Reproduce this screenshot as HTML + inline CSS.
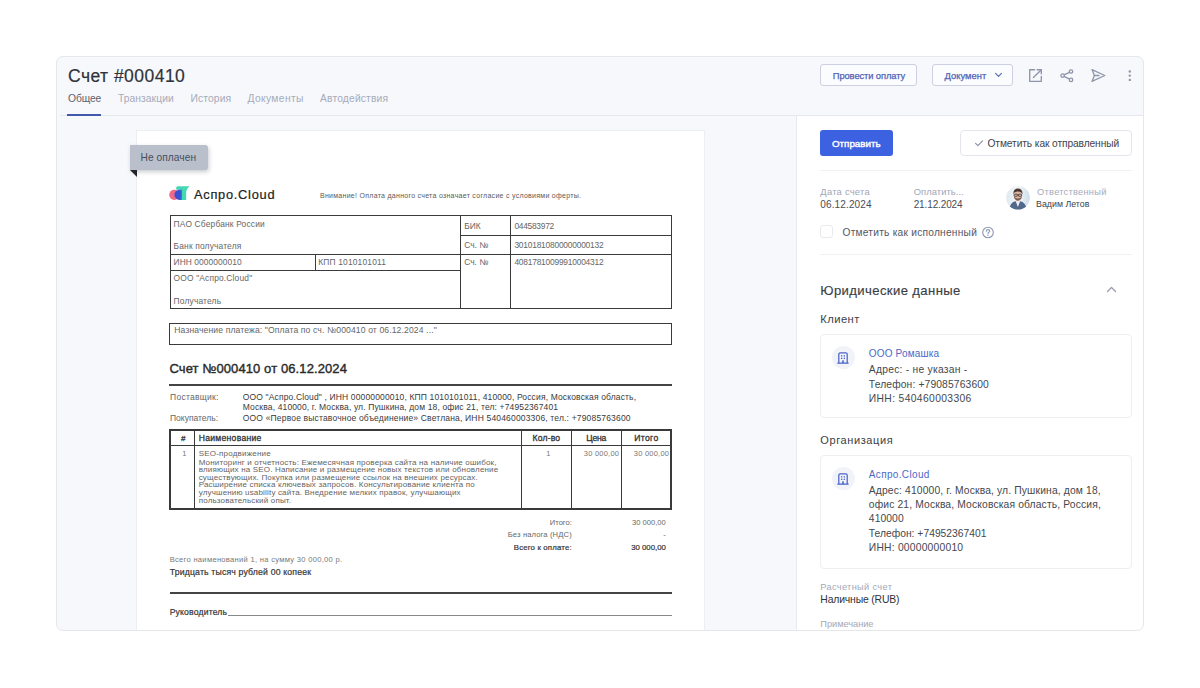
<!DOCTYPE html>
<html><head><meta charset="utf-8">
<style>
html,body{margin:0;padding:0;}
body{width:1200px;height:688px;overflow:hidden;background:#fff;position:relative;font-family:"Liberation Sans",sans-serif;}
.a{position:absolute;box-sizing:border-box;}
.t{position:absolute;white-space:nowrap;line-height:1;font-family:"Liberation Sans",sans-serif;}
.card{left:56px;top:56px;width:1088px;height:575px;border-radius:7px;background:#f7f8fc;}
.cardb{left:56px;top:56px;width:1088px;height:575px;border:1px solid #e6e7eb;border-radius:7px;pointer-events:none;}
.ln{position:absolute;background:#3a3a3a;}
</style></head><body>
<div class="a card"></div>
<!-- header line -->
<div class="a" style="left:60px;top:115px;width:1083px;height:1px;background:#e5e8ee"></div>
<div class="a" style="left:67px;top:113.5px;width:34px;height:2px;background:#4159ab"></div>
<!-- header buttons -->
<div class="a" style="left:820px;top:64px;width:97px;height:22px;border:1px solid #cbd1e1;border-radius:3px;background:#fbfcfe"></div>
<div class="a" style="left:932px;top:64px;width:81px;height:22px;border:1px solid #cbd1e1;border-radius:3px;background:#fbfcfe"></div>
<svg class="a" style="left:993px;top:70px" width="11" height="9" viewBox="0 0 11 9"><path d="M2.6 3.4 L5.5 6.3 L8.4 3.4" fill="none" stroke="#5b6bb6" stroke-width="1.15" stroke-linecap="round" stroke-linejoin="round"/></svg>
<!-- icons -->
<svg class="a" style="left:1026px;top:66px" width="20" height="20" viewBox="0 0 20 20"><g fill="none" stroke="#8d95a9" stroke-width="1.35" stroke-linecap="round" stroke-linejoin="round"><path d="M8.6 3.7 H3.7 V15.3 H15.3 V10.4"/><path d="M11.2 3.7 H15.3 V7.8"/><path d="M15.1 3.9 L7.4 11.6"/></g></svg>
<svg class="a" style="left:1057px;top:66px" width="20" height="20" viewBox="0 0 20 20"><g fill="none" stroke="#8d95a9" stroke-width="1.3"><circle cx="14" cy="5.5" r="1.7"/><circle cx="5.6" cy="9.6" r="1.7"/><circle cx="14" cy="13.9" r="1.7"/><path d="M7.1 8.8 L12.5 6.3 M7.1 10.4 L12.5 13.1"/></g></svg>
<svg class="a" style="left:1089px;top:66px" width="20" height="20" viewBox="0 0 20 20"><g fill="none" stroke="#8d95a9" stroke-width="1.3" stroke-linejoin="round" stroke-linecap="round"><path d="M3 3.6 L15.8 9.5 L3 15.4 L5.4 9.5 Z"/><path d="M5.4 9.5 H10"/></g></svg>
<svg class="a" style="left:1124px;top:66px" width="12" height="20" viewBox="0 0 12 20"><g fill="#8d95a9"><circle cx="5.8" cy="5.5" r="1.2"/><circle cx="5.8" cy="9.6" r="1.2"/><circle cx="5.8" cy="13.9" r="1.2"/></g></svg>

<!-- right panel -->
<div class="a" style="left:796px;top:116px;width:348px;height:515px;background:#fff;border-left:1px solid #e8eaee;border-bottom-right-radius:7px"></div>
<div class="a" style="left:820px;top:130px;width:73px;height:26px;border-radius:3px;background:#3c62e2"></div>
<div class="a" style="left:960px;top:130px;width:172px;height:26px;border:1px solid #e3e6ed;border-radius:4px;background:#fff"></div>
<svg class="a" style="left:973px;top:137px" width="12" height="12" viewBox="0 0 12 12"><path d="M2.6 6.4 L4.9 8.6 L9.6 3.9" fill="none" stroke="#8c92a9" stroke-width="1.2" stroke-linecap="round" stroke-linejoin="round"/></svg>
<div class="a" style="left:820px;top:170px;width:312px;height:1px;background:#eff1f5"></div>
<!-- avatar -->
<svg class="a" style="left:1006px;top:186px" width="24" height="24" viewBox="0 0 24 24">
<defs><clipPath id="av"><circle cx="12" cy="11.8" r="11.8"/></clipPath>
<linearGradient id="avbg" x1="0" y1="0" x2="1" y2="0"><stop offset="0" stop-color="#dfe9f0"/><stop offset="0.5" stop-color="#f3f6f9"/><stop offset="1" stop-color="#cddde8"/></linearGradient></defs>
<g clip-path="url(#av)"><rect width="24" height="24" fill="url(#avbg)"/>
<path d="M3 25 C3.5 18 7 15 11.8 14.8 C16.6 15 20.5 18 21 25 Z" fill="#51698a"/>
<path d="M9.6 14.9 L11.9 21 L14.2 14.9 Z" fill="#eceff5"/>
<rect x="10.2" y="11.5" width="3.4" height="3.6" fill="#c99c88"/>
<ellipse cx="11.9" cy="9" rx="4.2" ry="4.9" fill="#dab7a5"/>
<path d="M7.8 10.3 C8.2 13.5 10 14.3 11.9 14.3 C13.8 14.3 15.6 13.5 16 10.3 C15 12 13.5 12.4 11.9 12.4 C10.3 12.4 8.8 12 7.8 10.3 Z" fill="#7a5a4c"/>
<path d="M7.4 8.6 C7 4.5 9 2.6 11.9 2.6 C15 2.6 16.9 4.5 16.4 8.6 C16 6.8 14.5 5.6 11.9 5.6 C9.3 5.6 7.8 6.8 7.4 8.6 Z" fill="#4b3831"/>
<g fill="none" stroke="#3b3232" stroke-width="0.75"><rect x="8.2" y="8.2" width="3.1" height="2.1" rx="0.5"/><rect x="12.5" y="8.2" width="3.1" height="2.1" rx="0.5"/><path d="M11.3 8.9 H12.5"/></g>
</g></svg>
<!-- checkbox -->
<div class="a" style="left:820px;top:225px;width:13px;height:13px;border:1px solid #e9eaee;border-radius:3px;background:#fff"></div>
<svg class="a" style="left:981px;top:226px" width="14" height="14" viewBox="0 0 14 14"><circle cx="7" cy="6.5" r="5.3" fill="none" stroke="#8e9ab3" stroke-width="1.1"/><path d="M5.3 5.2 C5.3 4.1 6.1 3.6 7 3.6 C7.9 3.6 8.7 4.2 8.7 5.1 C8.7 6.3 7 6.3 7 7.6" fill="none" stroke="#8e9ab3" stroke-width="1.1" stroke-linecap="round"/><circle cx="7" cy="9.3" r="0.7" fill="#8e9ab3"/></svg>
<div class="a" style="left:820px;top:254px;width:312px;height:1px;background:#eff1f5"></div>
<svg class="a" style="left:1105px;top:283px" width="13" height="12" viewBox="0 0 13 12"><path d="M2.5 8.5 L6.5 4.5 L10.5 8.5" fill="none" stroke="#9a9ea9" stroke-width="1.3" stroke-linecap="round" stroke-linejoin="round"/></svg>
<!-- client card -->
<div class="a" style="left:820px;top:334px;width:312px;height:84px;border:1px solid #edeef2;border-radius:4px"></div>
<div class="a" style="left:832px;top:346px;width:23px;height:23px;border-radius:50%;background:#f1f3f9"></div>
<svg class="a" style="left:836px;top:351px" width="14" height="14" viewBox="0 0 14 14"><g fill="none" stroke="#4a64c9" stroke-width="1.25" stroke-linejoin="round"><path d="M2.8 12.1 V3.3 C2.8 2.4 3.4 1.8 4.3 1.8 H9.7 C10.6 1.8 11.2 2.4 11.2 3.3 V12.1"/><path d="M1.8 12.1 H12.2" stroke-linecap="round"/></g><g fill="#4a64c9"><rect x="5" y="4.2" width="1.3" height="1.3"/><rect x="7.7" y="4.2" width="1.3" height="1.3"/><rect x="5" y="6.7" width="1.3" height="1.3"/><rect x="7.7" y="6.7" width="1.3" height="1.3"/><rect x="6.2" y="9.3" width="1.6" height="2.8"/></g></svg>
<!-- org card -->
<div class="a" style="left:820px;top:455px;width:312px;height:114px;border:1px solid #edeef2;border-radius:4px"></div>
<div class="a" style="left:832px;top:467px;width:23px;height:23px;border-radius:50%;background:#f1f3f9"></div>
<svg class="a" style="left:836px;top:472px" width="14" height="14" viewBox="0 0 14 14"><g fill="none" stroke="#4a64c9" stroke-width="1.25" stroke-linejoin="round"><path d="M2.8 12.1 V3.3 C2.8 2.4 3.4 1.8 4.3 1.8 H9.7 C10.6 1.8 11.2 2.4 11.2 3.3 V12.1"/><path d="M1.8 12.1 H12.2" stroke-linecap="round"/></g><g fill="#4a64c9"><rect x="5" y="4.2" width="1.3" height="1.3"/><rect x="7.7" y="4.2" width="1.3" height="1.3"/><rect x="5" y="6.7" width="1.3" height="1.3"/><rect x="7.7" y="6.7" width="1.3" height="1.3"/><rect x="6.2" y="9.3" width="1.6" height="2.8"/></g></svg>

<!-- document page -->
<div class="a" style="left:136px;top:130px;width:569px;height:501px;background:#fff;border:1px solid #eceef2;border-bottom:none"></div>
<!-- ribbon -->
<div class="a" style="left:130px;top:145px;width:78px;height:25px;background:#b9c0cc;border-radius:0 3px 3px 0;box-shadow:1px 2px 4px rgba(40,50,70,.25)"></div>
<svg class="a" style="left:130px;top:170px" width="8" height="8" viewBox="0 0 8 8"><path d="M0 0 H7 V7 Z" fill="#23262c"/></svg>
<!-- logo -->
<svg class="a" style="left:168px;top:185px" width="23" height="16" viewBox="168 185 23 16">
<path d="M176.2,187.8 C176.2,186.9 176.9,186.2 177.8,186.2 H189.6 C187.9,187.8 186.4,189.6 186.2,192 V199.9 H181.6 V189.7 H176.2 Z" fill="#44d9b4"/>
<circle cx="174.3" cy="194.8" r="5.1" fill="#f06a86"/>
<path d="M181.8,189.7 H179.5 C176.8,189.7 174.4,192 174.4,194.8 C174.4,197.6 176.8,199.9 179.5,199.9 H181.8 Z" fill="#3a50d4"/>
<path d="M180.2,189.7 H181.8 V199.9 H180.2 C181,197 181,192.5 180.2,189.7 Z" fill="#2d7fc6"/>
</svg>
<!-- bank table -->
<div class="a" style="left:170px;top:215px;width:502px;height:94px;border:1px solid #3a3a3a"></div>
<div class="ln" style="left:460px;top:215px;width:1px;height:94px"></div>
<div class="ln" style="left:510px;top:215px;width:1px;height:94px"></div>
<div class="ln" style="left:460px;top:235px;width:212px;height:1px"></div>
<div class="ln" style="left:170px;top:254px;width:502px;height:1px"></div>
<div class="ln" style="left:315px;top:254px;width:1px;height:17px"></div>
<div class="ln" style="left:170px;top:270px;width:291px;height:1px"></div>
<!-- purpose box -->
<div class="a" style="left:169px;top:323px;width:503px;height:22px;border:1px solid #3a3a3a"></div>
<div class="ln" style="left:169px;top:384px;width:503px;height:2px;background:#444"></div>
<!-- items table -->
<div class="a" style="left:169px;top:429px;width:503px;height:81px;border:2px solid #3a3a3a"></div>
<div class="ln" style="left:170px;top:445px;width:501px;height:1px"></div>
<div class="ln" style="left:194px;top:430px;width:1px;height:79px"></div>
<div class="ln" style="left:521px;top:430px;width:1px;height:79px"></div>
<div class="ln" style="left:571px;top:430px;width:1px;height:79px"></div>
<div class="ln" style="left:621px;top:430px;width:1px;height:79px"></div>
<div class="ln" style="left:170px;top:592px;width:502px;height:2px;background:#444"></div>
<div class="ln" style="left:228px;top:615px;width:444px;height:1px;background:#888"></div>
<div class="t" style="top:66px;font-size:17.5px;line-height:20px;color:#2f3239;left:68.00px;letter-spacing:0.465px;-webkit-text-stroke:0.2px #2f3239;">Счет #000410</div>
<div class="t" style="top:93px;font-size:10.3px;line-height:11px;color:#5e626d;left:68.00px;letter-spacing:-0.105px;">Общее</div>
<div class="t" style="top:93px;font-size:10.3px;line-height:11px;color:#a6abb9;left:118.00px;letter-spacing:0.053px;">Транзакции</div>
<div class="t" style="top:93px;font-size:10.3px;line-height:11px;color:#a6abb9;left:190.50px;letter-spacing:0.115px;">История</div>
<div class="t" style="top:93px;font-size:10.3px;line-height:11px;color:#a6abb9;left:247.50px;letter-spacing:0.351px;">Документы</div>
<div class="t" style="top:93px;font-size:10.3px;line-height:11px;color:#a6abb9;left:320.00px;letter-spacing:0.156px;">Автодействия</div>
<div class="t" style="top:70px;font-size:9.4px;line-height:11px;color:#5163b5;left:832.80px;letter-spacing:-0.115px;-webkit-text-stroke:0.25px #5163b5;">Провести оплату</div>
<div class="t" style="top:70px;font-size:9.4px;line-height:11px;color:#5163b5;left:944.50px;letter-spacing:0.038px;-webkit-text-stroke:0.25px #5163b5;">Документ</div>
<div class="t" style="top:138px;font-size:9.8px;line-height:11px;color:#ffffff;left:832.00px;letter-spacing:-0.010px;-webkit-text-stroke:0.4px #ffffff;">Отправить</div>
<div class="t" style="top:138px;font-size:10.2px;line-height:11px;color:#3f424a;left:987.50px;letter-spacing:-0.088px;">Отметить как отправленный</div>
<div class="t" style="top:186px;font-size:9.4px;line-height:11px;color:#a1a6b7;left:820.30px;letter-spacing:0.244px;">Дата счета</div>
<div class="t" style="top:199px;font-size:10px;line-height:11px;color:#4a4d56;left:820.30px;letter-spacing:0.135px;">06.12.2024</div>
<div class="t" style="top:186px;font-size:9.4px;line-height:11px;color:#a1a6b7;left:913.70px;letter-spacing:0.073px;">Оплатить...</div>
<div class="t" style="top:199px;font-size:10px;line-height:11px;color:#4a4d56;left:913.70px;letter-spacing:-0.125px;">21.12.2024</div>
<div class="t" style="top:187px;font-size:9.3px;line-height:10px;color:#a6abbb;left:1037.10px;letter-spacing:0.237px;">Ответственный</div>
<div class="t" style="top:199px;font-size:8.8px;line-height:10px;color:#3e4149;left:1036.00px;letter-spacing:0.019px;">Вадим Летов</div>
<div class="t" style="top:227px;font-size:10.2px;line-height:11px;color:#55585f;left:842.50px;letter-spacing:0.233px;">Отметить как исполненный</div>
<div class="t" style="top:283px;font-size:13.1px;line-height:15px;color:#3b3e45;left:820.30px;letter-spacing:0.387px;-webkit-text-stroke:0.15px #3b3e45;">Юридические данные</div>
<div class="t" style="top:313px;font-size:11.2px;line-height:12px;color:#3b3e45;left:820.30px;letter-spacing:0.440px;">Клиент</div>
<div class="t" style="top:348px;font-size:10px;line-height:11px;color:#4d68c6;left:868.80px;letter-spacing:0.171px;">ООО Ромашка</div>
<div class="t" style="top:364px;font-size:10.3px;line-height:11px;color:#44474e;left:868.80px;letter-spacing:0.250px;">Адрес: - не указан -</div>
<div class="t" style="top:379px;font-size:10.3px;line-height:11px;color:#44474e;left:868.80px;letter-spacing:0.130px;">Телефон: +79085763600</div>
<div class="t" style="top:393px;font-size:10.3px;line-height:11px;color:#44474e;left:868.80px;letter-spacing:0.362px;">ИНН: 540460003306</div>
<div class="t" style="top:434px;font-size:11px;line-height:12px;color:#3b3e45;left:820.30px;letter-spacing:0.605px;">Организация</div>
<div class="t" style="top:469px;font-size:10px;line-height:11px;color:#4d68c6;left:868.80px;letter-spacing:0.344px;">Аспро.Cloud</div>
<div class="t" style="top:485px;font-size:10.3px;line-height:11px;color:#44474e;left:868.80px;letter-spacing:0.148px;">Адрес: 410000, г. Москва, ул. Пушкина, дом 18,</div>
<div class="t" style="top:499px;font-size:10.3px;line-height:11px;color:#44474e;left:868.80px;letter-spacing:0.144px;">офис 21, Москва, Московская область, Россия,</div>
<div class="t" style="top:513px;font-size:10.3px;line-height:11px;color:#44474e;left:868.80px;letter-spacing:0.105px;">410000</div>
<div class="t" style="top:528px;font-size:10.3px;line-height:11px;color:#44474e;left:868.80px;letter-spacing:0.015px;">Телефон: +74952367401</div>
<div class="t" style="top:542px;font-size:10.3px;line-height:11px;color:#44474e;left:868.80px;letter-spacing:0.218px;">ИНН: 00000000010</div>
<div class="t" style="top:582px;font-size:9.2px;line-height:10px;color:#a3a8b8;left:820.30px;letter-spacing:0.360px;">Расчетный счет</div>
<div class="t" style="top:594px;font-size:10.4px;line-height:11px;color:#2f3238;left:820.30px;letter-spacing:-0.162px;">Наличные (RUB)</div>
<div class="t" style="top:619px;font-size:9.2px;line-height:10px;color:#a3a8b8;left:820.30px;">Примечание</div>
<div class="t" style="top:152px;font-size:10.2px;line-height:11px;color:#474e5e;left:140.50px;letter-spacing:0.061px;">Не оплачен</div>
<div class="t" style="top:187px;font-size:12.8px;line-height:15px;color:#1d1e23;left:194.00px;letter-spacing:0.745px;-webkit-text-stroke:0.22px #1d1e23;">Аспро.Cloud</div>
<div class="t" style="top:192px;font-size:7.0px;line-height:7px;color:#5a5a5a;left:320.00px;letter-spacing:0.278px;">Внимание! Оплата данного счета означает согласие с условиями оферты.</div>
<div class="t" style="top:219px;font-size:8.4px;line-height:10px;color:#666;left:173.60px;letter-spacing:0.185px;">ПАО Сбербанк России</div>
<div class="t" style="top:241px;font-size:8.4px;line-height:10px;color:#666;left:173.60px;letter-spacing:0.174px;">Банк получателя</div>
<div class="t" style="top:257px;font-size:8.4px;line-height:10px;color:#666;left:173.60px;letter-spacing:0.084px;">ИНН 0000000010</div>
<div class="t" style="top:257px;font-size:8.4px;line-height:10px;color:#666;left:318.25px;letter-spacing:0.187px;">КПП 1010101011</div>
<div class="t" style="top:273px;font-size:8.4px;line-height:10px;color:#666;left:173.60px;letter-spacing:0.179px;">ООО "Аспро.Cloud"</div>
<div class="t" style="top:296px;font-size:8.4px;line-height:10px;color:#666;left:173.60px;letter-spacing:0.184px;">Получатель</div>
<div class="t" style="top:221px;font-size:8.4px;line-height:10px;color:#666;left:464.20px;">БИК</div>
<div class="t" style="top:221px;font-size:8.4px;line-height:10px;color:#666;left:514.40px;letter-spacing:-0.261px;">044583972</div>
<div class="t" style="top:240px;font-size:8.4px;line-height:10px;color:#666;left:464.20px;">Сч. №</div>
<div class="t" style="top:240px;font-size:8.4px;line-height:10px;color:#666;left:514.40px;letter-spacing:-0.207px;">30101810800000000132</div>
<div class="t" style="top:257px;font-size:8.4px;line-height:10px;color:#666;left:464.20px;">Сч. №</div>
<div class="t" style="top:257px;font-size:8.4px;line-height:10px;color:#666;left:514.40px;letter-spacing:-0.207px;">40817810099910004312</div>
<div class="t" style="top:325px;font-size:8.6px;line-height:10px;color:#666;left:174.25px;letter-spacing:0.119px;">Назначение платежа: "Оплата по сч. №000410 от 06.12.2024 ..."</div>
<div class="t" style="top:361px;font-size:13px;line-height:15px;color:#2a2a2a;left:169.50px;letter-spacing:0.100px;-webkit-text-stroke:0.4px #2a2a2a;">Счет №000410 от 06.12.2024</div>
<div class="t" style="top:392px;font-size:8.5px;line-height:10px;color:#666;left:170.00px;letter-spacing:0.275px;">Поставщик:</div>
<div class="t" style="top:392px;font-size:8.5px;line-height:10px;color:#3a3a3a;left:242.80px;letter-spacing:0.144px;">ООО "Аспро.Cloud" , ИНН 00000000010, КПП 1010101011, 410000, Россия, Московская область,</div>
<div class="t" style="top:402px;font-size:8.5px;line-height:10px;color:#3a3a3a;left:242.80px;letter-spacing:0.139px;">Москва, 410000, г. Москва, ул. Пушкина, дом 18, офис 21, тел: +74952367401</div>
<div class="t" style="top:413px;font-size:8.5px;line-height:10px;color:#666;left:170.00px;">Покупатель:</div>
<div class="t" style="top:413px;font-size:8.5px;line-height:10px;color:#3a3a3a;left:242.80px;letter-spacing:0.173px;">ООО «Первое выставочное объединение» Светлана, ИНН 540460003306, тел.: +79085763600</div>
<div class="t" style="top:434px;font-size:8px;line-height:9px;color:#333;left:181.00px;-webkit-text-stroke:0.3px #333;">#</div>
<div class="t" style="top:433px;font-size:8.6px;line-height:10px;color:#333;left:198.70px;letter-spacing:0.282px;-webkit-text-stroke:0.3px #333;">Наименование</div>
<div class="t" style="top:433px;font-size:8.6px;line-height:10px;color:#333;left:532.50px;letter-spacing:0.177px;-webkit-text-stroke:0.3px #333;">Кол-во</div>
<div class="t" style="top:433px;font-size:8.6px;line-height:10px;color:#333;left:586.25px;letter-spacing:-0.219px;-webkit-text-stroke:0.3px #333;">Цена</div>
<div class="t" style="top:433px;font-size:8.6px;line-height:10px;color:#333;left:634.25px;letter-spacing:0.353px;-webkit-text-stroke:0.3px #333;">Итого</div>
<div class="t" style="top:449px;font-size:7.5px;line-height:9px;color:#777;left:182.30px;">1</div>
<div class="t" style="top:449px;font-size:7.5px;line-height:9px;color:#777;left:546.25px;">1</div>
<div class="t" style="top:449px;font-size:7.5px;line-height:9px;color:#777;left:583.75px;letter-spacing:0.237px;">30 000,00</div>
<div class="t" style="top:449px;font-size:7.5px;line-height:9px;color:#777;left:633.75px;letter-spacing:0.237px;">30 000,00</div>
<div class="t" style="top:449px;font-size:8.0px;line-height:9px;color:#646464;left:198.70px;letter-spacing:0.199px;">SEO-продвижение</div>
<div class="t" style="top:458px;font-size:8.0px;line-height:9px;color:#646464;left:198.70px;letter-spacing:0.176px;">Мониторинг и отчетность: Ежемесячная проверка сайта на наличие ошибок,</div>
<div class="t" style="top:465px;font-size:8.0px;line-height:9px;color:#646464;left:198.70px;letter-spacing:0.182px;">влияющих на SEO. Написание и размещение новых текстов или обновление</div>
<div class="t" style="top:473px;font-size:8.0px;line-height:9px;color:#646464;left:198.70px;letter-spacing:0.180px;">существующих. Покупка или размещение ссылок на внешних ресурсах.</div>
<div class="t" style="top:480px;font-size:8.0px;line-height:9px;color:#646464;left:198.70px;letter-spacing:0.178px;">Расширение списка ключевых запросов. Консультирование клиента по</div>
<div class="t" style="top:488px;font-size:8.0px;line-height:9px;color:#646464;left:198.70px;letter-spacing:0.175px;">улучшению usability сайта. Внедрение мелких правок, улучшающих</div>
<div class="t" style="top:496px;font-size:8.0px;line-height:9px;color:#646464;left:198.70px;letter-spacing:0.174px;">пользовательский опыт.</div>
<div class="t" style="top:518px;font-size:7.6px;line-height:9px;color:#666;right:628.20px;">Итого:</div>
<div class="t" style="top:518px;font-size:7.6px;line-height:9px;color:#666;right:534.20px;">30 000,00</div>
<div class="t" style="top:530px;font-size:7.6px;line-height:9px;color:#666;right:628.20px;letter-spacing:0.135px;">Без налога (НДС)</div>
<div class="t" style="top:530px;font-size:7.6px;line-height:9px;color:#666;right:534.20px;">-</div>
<div class="t" style="top:543px;font-size:7.8px;line-height:9px;color:#333;right:628.20px;letter-spacing:0.169px;-webkit-text-stroke:0.2px #333;">Всего к оплате:</div>
<div class="t" style="top:543px;font-size:7.8px;line-height:9px;color:#333;right:534.20px;-webkit-text-stroke:0.2px #333;">30 000,00</div>
<div class="t" style="top:555px;font-size:7.6px;line-height:9px;color:#777;left:169.70px;letter-spacing:0.280px;">Всего наименований 1, на сумму 30 000,00 р.</div>
<div class="t" style="top:567px;font-size:8.7px;line-height:10px;color:#353535;left:169.70px;letter-spacing:0.170px;-webkit-text-stroke:0.2px #353535;">Тридцать тысяч рублей 00 копеек</div>
<div class="t" style="top:607px;font-size:8.6px;line-height:10px;color:#353535;left:169.70px;letter-spacing:0.175px;-webkit-text-stroke:0.2px #353535;">Руководитель</div>
<div class="a cardb"></div>
</body></html>
